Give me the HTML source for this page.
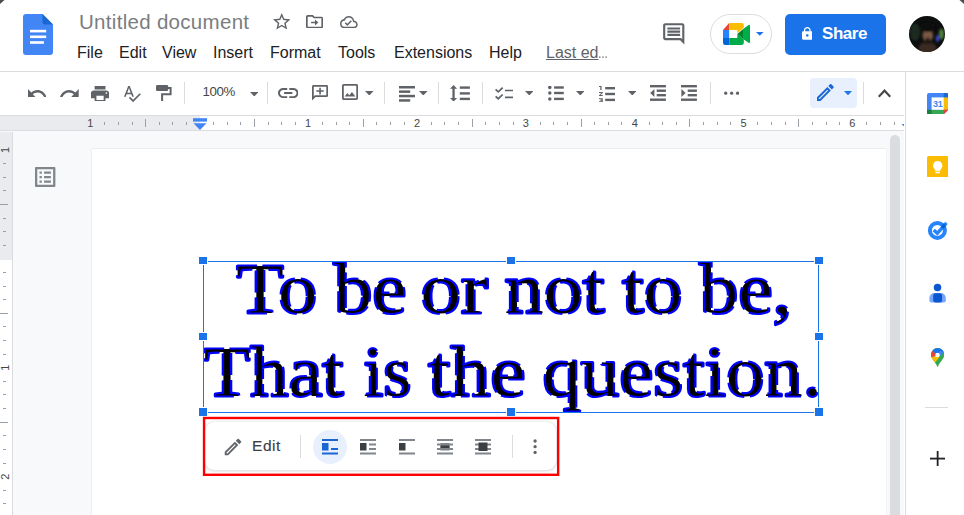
<!DOCTYPE html>
<html lang="en">
<head>
<meta charset="utf-8">
<title>Untitled document - Google Docs</title>
<style>
html,body{margin:0;padding:0;}
html{overflow:hidden;background:#fff;}
body{width:964px;height:515px;overflow:hidden;background:#fff;position:relative;font-family:"Liberation Sans",sans-serif;color:#202124;}
.abs{position:absolute;}
#header{left:0;top:0;width:964px;height:71px;background:#fff;border-bottom:1px solid #dadce0;}
#title{left:79px;top:10px;font-size:20.5px;line-height:24px;color:#7a7d80;white-space:nowrap;letter-spacing:0.3px;}
.menu{top:44px;font-size:16px;line-height:18px;color:#202124;white-space:nowrap;}
#toolbar{left:0;top:72px;width:904px;height:43px;background:#fff;}
.sep{width:1px;background:#dadce0;top:82px;height:22px;}
#hruler{left:0;top:115px;width:904px;height:14px;background:#fff;border-top:1px solid #dadce0;border-bottom:1px solid #dadce0;box-sizing:content-box;}
#canvas{left:0;top:131px;width:904px;height:384px;background:#f8f9fa;}
#vruler{left:0;top:132px;width:12px;height:383px;background:#fff;border-right:1px solid #dadce0;}
#sidebar{left:905px;top:72px;width:59px;height:443px;background:#fff;border-left:1px solid #dadce0;box-sizing:border-box;}
#page{left:92px;top:149px;width:794px;height:366px;background:#fff;box-shadow:0 -1px 0 0 #ebedef,-1px 0 0 0 #eceef0,1px 0 0 0 #f3f4f6;}
.h{width:8px;height:7px;background:#1a73e8;box-shadow:0 0 0 1px #fff;}
</style>
</head>
<body>
<div id="header" class="abs"></div>
<svg class="abs" style="left:0;top:0" width="8" height="8" viewBox="0 0 8 8"><path d="M0 0H4.5L0 4Z" fill="#4a4d51"/></svg>
<svg class="abs" style="left:956px;top:0" width="8" height="8" viewBox="0 0 8 8"><path d="M3.5 0H8V4Z" fill="#4a4d51"/></svg>
<svg class="abs" style="left:23px;top:14px" width="30" height="41" viewBox="0 0 30 41"><path d="M3 0H19.5L30 10.5V38a3 3 0 0 1-3 3H3a3 3 0 0 1-3-3V3a3 3 0 0 1 3-3Z" fill="#4285f4"/><path d="M19.5 0L30 10.5H21.5a2 2 0 0 1-2-2Z" fill="#1967d2"/><rect x="7" y="15.8" width="16.2" height="2.6" fill="#fff"/><rect x="7" y="21.5" width="16.2" height="2.6" fill="#fff"/><rect x="7" y="27.2" width="13.900" height="2.6" fill="#fff"/></svg>
<div id="title" class="abs">Untitled document</div>
<div class="abs menu" style="left:77px">File</div>
<div class="abs menu" style="left:119px">Edit</div>
<div class="abs menu" style="left:162px">View</div>
<div class="abs menu" style="left:213px">Insert</div>
<div class="abs menu" style="left:270px">Format</div>
<div class="abs menu" style="left:338px">Tools</div>
<div class="abs menu" style="left:394px">Extensions</div>
<div class="abs menu" style="left:489px">Help</div>
<div class="abs menu" style="left:546px;color:#5f6368;"><span style="text-decoration:underline">Last ed</span><span style="display:inline-block;transform:scaleX(.62);transform-origin:0 50%">…</span></div>
<svg class="abs" style="left:272.50px;top:13.10px" width="17.50" height="16.60" viewBox="2 2 20 19" preserveAspectRatio="none"><path fill="#5f6368" d="M22 9.24l-7.19-.62L12 2 9.19 8.63 2 9.24l5.46 4.73L5.82 21 12 17.27 18.18 21l-1.63-7.03L22 9.24zM12 15.4l-3.76 2.27 1-4.28-3.32-2.88 4.38-.38L12 6.1l1.71 4.04 4.38.38-3.32 2.88 1 4.28L12 15.4z"/></svg>
<svg class="abs" style="left:306.30px;top:14.60px" width="17.10" height="13.30" viewBox="2 4 20 16" preserveAspectRatio="none"><path fill="#5f6368" d="M20 6h-8l-2-2H4c-1.1 0-2 .9-2 2v12c0 1.1.9 2 2 2h16c1.1 0 2-.9 2-2V8c0-1.1-.9-2-2-2zm0 12H4V6h5.17l2 2H20v10zm-7.5-1.5l4-3.5-4-3.5v2.5H8v2h4.5v2.5z"/></svg>
<svg class="abs" style="left:340.20px;top:16.00px" width="17.70" height="12.30" viewBox="0 4 24 16" preserveAspectRatio="none"><path fill="#5f6368" d="M19.35 10.04C18.67 6.59 15.64 4 12 4 9.11 4 6.6 5.64 5.35 8.04 2.34 8.36 0 10.91 0 14c0 3.31 2.69 6 6 6h13c2.76 0 5-2.24 5-5 0-2.64-2.05-4.78-4.65-4.96zM19 18H6c-2.21 0-4-1.79-4-4 0-2.05 1.53-3.76 3.56-3.97l1.07-.11.5-.95C8.08 7.14 9.94 6 12 6c2.62 0 4.88 1.86 5.39 4.43l.3 1.5 1.53.11c1.56.1 2.78 1.41 2.78 2.96 0 1.65-1.35 3-3 3zm-9-3.82l-2.09-2.09L6.5 13.5 10 17l6.01-6.01-1.41-1.41z"/></svg>
<svg class="abs" style="left:661.05px;top:20.75px" width="25.5" height="25.5" viewBox="0 0 24 24" ><path fill="#5f6368" d="M21.99 4c0-1.1-.89-2-1.99-2H4c-1.1 0-2 .9-2 2v12c0 1.1.9 2 2 2h14l4 4-.01-18zM20 4v13.17L18.83 16H4V4h16zM6 12h12v2H6zm0-3h12v2H6zm0-3h12v2H6z"/></svg>
<div class="abs" style="left:710.3px;top:14px;width:61.5px;height:40px;border:1px solid #dadce0;border-radius:21px;box-sizing:border-box;background:#fff"></div>
<svg class="abs" style="left:722.9px;top:23px" width="27" height="21.9" viewBox="0 0 27 21.9"><path d="M0 7L6.150 0V7Z" fill="#ea4335"/><path d="M6.150 0H19a1.8 1.8 0 0 1 1.8 1.8V4.6L14.3 10.3V7H6.150Z" fill="#fbbc04"/><rect x="0" y="7" width="6.150" height="8" fill="#2684fc"/><path d="M0 15H6.150V21.900H1.8a1.8 1.8 0 0 1-1.8-1.8Z" fill="#0066da"/><path d="M6.150 15H14.3V11L20.8 16.6V20.100a1.8 1.8 0 0 1-1.8 1.8H6.150Z" fill="#00ac47"/><path d="M14.3 11L20.8 5.400V16.6Z" fill="#00832d"/><path d="M20.8 5.400L25.6 1.900C26.3 1.400 27 1.8 27 2.7V18.900C27 19.8 26.3 20.2 25.6 19.7L20.8 16.6Z" fill="#00ac47"/></svg>
<svg class="abs" style="left:756.1px;top:31.900px" width="7.6" height="3.8" viewBox="0 0 8 4"><path d="M0 0H8L4 4Z" fill="#1a73e8"/></svg>
<div class="abs" style="left:785px;top:14px;width:101px;height:41px;border-radius:5px;background:#1a73e8"></div>
<svg class="abs" style="left:801.80px;top:27.30px" width="10.60" height="12.80" viewBox="4 1 16 21" preserveAspectRatio="none"><path fill="#fff" d="M18 8h-1V6c0-2.76-2.24-5-5-5S7 3.24 7 6v2H6c-1.1 0-2 .9-2 2v10c0 1.1.9 2 2 2h12c1.1 0 2-.9 2-2V10c0-1.1-.9-2-2-2zm-6 9c-1.1 0-2-.9-2-2s.9-2 2-2 2 .9 2 2-.9 2-2 2zm3.1-9H8.9V6c0-1.71 1.39-3.1 3.1-3.1 1.71 0 3.1 1.39 3.1 3.1v2z"/></svg>
<div class="abs" style="left:822px;top:22px;font-size:17px;line-height:24px;font-weight:bold;color:#fff;letter-spacing:-0.45px">Share</div>
<svg class="abs" style="left:909px;top:16px" width="36" height="36" viewBox="0 0 36 36"><defs><clipPath id="avc"><circle cx="18" cy="18" r="18"/></clipPath><filter id="avb" x="-50%" y="-50%" width="200%" height="200%"><feGaussianBlur stdDeviation="1.1"/></filter></defs><g clip-path="url(#avc)"><rect width="36" height="36" fill="#0d0f0e"/><g filter="url(#avb)"><ellipse cx="6" cy="16" rx="5" ry="9" fill="#1c2a20"/><ellipse cx="32.5" cy="18" rx="2.5" ry="5.5" fill="#4f7f3a"/><ellipse cx="28.5" cy="22.5" rx="1.6" ry="3.2" fill="#3b48d8"/><ellipse cx="18.5" cy="32" rx="9" ry="6" fill="#3b2a22"/><ellipse cx="18.8" cy="19.5" rx="5.2" ry="6.8" fill="#7a5945"/><ellipse cx="18.8" cy="11.5" rx="8" ry="4.5" fill="#0b0b0b"/><ellipse cx="18.8" cy="25.5" rx="4" ry="2.2" fill="#1a1411"/><ellipse cx="18.8" cy="22.3" rx="2.2" ry="0.900" fill="#2a1c16"/></g></g></svg>
<div id="toolbar" class="abs"></div>
<svg class="abs" style="left:27.80px;top:88.50px" width="18.50" height="8.80" viewBox="2 7 20.47 9" preserveAspectRatio="none"><path fill="#5f6368" d="M12.5 8c-2.65 0-5.05.99-6.9 2.6L2 7v9h9l-3.62-3.62c1.39-1.16 3.16-1.88 5.12-1.88 3.54 0 6.55 2.31 7.6 5.5l2.37-.78C21.08 11.03 17.15 8 12.5 8z"/></svg>
<svg class="abs" style="left:60.00px;top:88.50px" width="18.70" height="8.80" viewBox="1.54 7 20.46 9" preserveAspectRatio="none"><path fill="#5f6368" d="M18.4 10.6C16.55 8.99 14.15 8 11.5 8c-4.65 0-8.58 3.03-9.96 7.22L3.9 16c1.05-3.19 4.05-5.5 7.6-5.5 1.95 0 3.73.72 5.12 1.88L13 16h9V7l-3.6 3.6z"/></svg>
<svg class="abs" style="left:91.20px;top:85.50px" width="18.10" height="15.80" viewBox="2 3 20 18" preserveAspectRatio="none"><path fill="#5f6368" d="M19 8H5c-1.66 0-3 1.34-3 3v6h4v4h12v-4h4v-6c0-1.66-1.34-3-3-3zm-3 11H8v-5h8v5zm3-7c-.55 0-1-.45-1-1s.45-1 1-1 1 .45 1 1-.45 1-1 1zm-1-9H6v4h12V3z"/></svg>
<svg class="abs" style="left:123.80px;top:85.50px" width="16.90" height="16.20" viewBox="2.46 3 20.54 19.5" preserveAspectRatio="none"><path fill="#5f6368" d="M12.45 16h2.09L9.43 3H7.57L2.46 16h2.09l1.12-3h5.64l1.14 3zm-6.02-5L8.5 5.48 10.57 11H6.43zm15.16.59l-8.09 8.09L9.83 16l-1.41 1.41 5.09 5.09L23 13l-1.41-1.41z"/></svg>
<svg class="abs" style="left:277.80px;top:87.80px" width="20.50" height="10.10" viewBox="2 7 20 10" preserveAspectRatio="none"><path fill="#5f6368" d="M3.9 12c0-1.71 1.39-3.1 3.1-3.1h4V7H7c-2.76 0-5 2.24-5 5s2.24 5 5 5h4v-1.9H7c-1.71 0-3.1-1.39-3.1-3.1zM8 13h8v-2H8v2zm9-6h-4v1.9h4c1.71 0 3.1 1.39 3.1 3.1s-1.39 3.1-3.1 3.1h-4V17h4c2.76 0 5-2.24 5-5s-2.24-5-5-5z"/></svg>
<svg class="abs" style="left:312.20px;top:85.10px" width="16.10" height="15.50" viewBox="2 2 20 20" preserveAspectRatio="none"><path fill="#5f6368" d="M2 4c0-1.1.9-2 2-2h16c1.1 0 2 .9 2 2v11.5c0 1.1-.9 2-2 2H6.5L2 22V4zm2.2 12.8L5.5 15.3H19.8V4.2H4.2v12.6zM11 5.400h2v3.400h3.6v2H13v3.400h-2v-3.400H7.400v-2H11z"/></svg>
<svg class="abs" style="left:342.20px;top:84.40px" width="16.10" height="16.00" viewBox="3 3 18 18" preserveAspectRatio="none"><path fill="#5f6368" d="M19 5v14H5V5h14m0-2H5c-1.1 0-2 .9-2 2v14c0 1.1.9 2 2 2h14c1.1 0 2-.9 2-2V5c0-1.1-.9-2-2-2zm-4.86 8.86l-3 3.87L9 13.14 6 17h12l-3.86-5.14z"/></svg>
<svg class="abs" style="left:495.20px;top:86.50px" width="18.20" height="13.00" viewBox="2 3.93 20 15.07" preserveAspectRatio="none"><path fill="#5f6368" d="M22 7h-9v2h9V7zm0 8h-9v2h9v-2zM5.54 11L2 7.46l1.41-1.41 2.12 2.12 4.24-4.24 1.41 1.41L5.54 11zm0 8L2 15.46l1.41-1.41 2.12 2.12 4.24-4.24 1.41 1.41L5.54 19z"/></svg>
<svg class="abs" style="left:249.80px;top:91.90px" width="8.60" height="4.50" viewBox="7 10 10 5" preserveAspectRatio="none"><path fill="#5f6368" d="M7 10l5 5 5-5z"/></svg>
<svg class="abs" style="left:365.10px;top:90.90px" width="8.60" height="4.50" viewBox="7 10 10 5" preserveAspectRatio="none"><path fill="#5f6368" d="M7 10l5 5 5-5z"/></svg>
<svg class="abs" style="left:419.00px;top:90.90px" width="8.60" height="4.50" viewBox="7 10 10 5" preserveAspectRatio="none"><path fill="#5f6368" d="M7 10l5 5 5-5z"/></svg>
<svg class="abs" style="left:524.70px;top:90.90px" width="8.60" height="4.50" viewBox="7 10 10 5" preserveAspectRatio="none"><path fill="#5f6368" d="M7 10l5 5 5-5z"/></svg>
<svg class="abs" style="left:575.70px;top:90.90px" width="8.60" height="4.50" viewBox="7 10 10 5" preserveAspectRatio="none"><path fill="#5f6368" d="M7 10l5 5 5-5z"/></svg>
<svg class="abs" style="left:627.60px;top:90.90px" width="8.60" height="4.50" viewBox="7 10 10 5" preserveAspectRatio="none"><path fill="#5f6368" d="M7 10l5 5 5-5z"/></svg>
<svg class="abs" style="left:156.00px;top:85.00px" width="16" height="16.5" viewBox="0 0 16 16.5"><rect x="0" y="0.100" width="12.2" height="6" rx="1.3" fill="#5f6368"/><path d="M12 3H14.6V9.3H6.100V15.900" fill="none" stroke="#5f6368" stroke-width="2"/></svg>
<svg class="abs" style="left:450.30px;top:84.70px" width="20" height="16.6" viewBox="0 0 20 16.6"><path d="M3.550 0L7.100 3.7H4.7V12.900H7.100L3.550 16.6L0 12.900H2.400V3.7H0Z" fill="#5f6368"/><rect x="9.8" y="1.400" width="10.100" height="2.400" fill="#5f6368"/><rect x="9.8" y="7.2" width="10.100" height="2.400" fill="#5f6368"/><rect x="9.8" y="12.7" width="10.100" height="2.400" fill="#5f6368"/></svg>
<svg class="abs" style="left:548.00px;top:85.80px" width="16" height="15" viewBox="0 0 16 15"><circle cx="1.8" cy="1.5" r="1.750" fill="#5f6368"/><circle cx="1.8" cy="7" r="1.750" fill="#5f6368"/><circle cx="1.8" cy="12.900" r="1.750" fill="#5f6368"/><rect x="6.100" y="0.3" width="9.7" height="2.400" fill="#5f6368"/><rect x="6.100" y="5.8" width="9.7" height="2.400" fill="#5f6368"/><rect x="6.100" y="11.7" width="9.7" height="2.400" fill="#5f6368"/></svg>
<svg class="abs" style="left:598.90px;top:85.50px" width="16.4" height="16.4" viewBox="0 0 16.4 16.4"><path transform="translate(-2.540,-4.050) scale(1.270,1.0125)" d="M2 17h2v.5H3v1h1v.5H2v1h3v-4H2v1zm1-9h1V4H2v1h1v3zm-1 3h1.8L2 13.100v.9h3v-1H3.2L5 10.900V10H2v1z" fill="#5f6368"/><rect x="6.2" y="1" width="10" height="2.400" fill="#5f6368"/><rect x="6.2" y="6.8" width="10" height="2.400" fill="#5f6368"/><rect x="6.2" y="12.7" width="10" height="2.400" fill="#5f6368"/></svg>
<svg class="abs" style="left:723.60px;top:90.90px" width="15.4" height="4.4" viewBox="0 0 15.4 4.4"><circle cx="1.7" cy="2.150" r="1.650" fill="#5f6368"/><circle cx="7.650" cy="2.150" r="1.650" fill="#5f6368"/><circle cx="13.6" cy="2.150" r="1.650" fill="#5f6368"/></svg>
<svg class="abs" style="left:398.80px;top:85.50px" width="16.2" height="16" viewBox="0 0 16.2 16"><rect x="0" y="0" width="16.100" height="2.5" fill="#5f6368"/><rect x="0" y="4.400" width="11.2" height="2.5" fill="#5f6368"/><rect x="0" y="8.8" width="16.100" height="2.5" fill="#5f6368"/><rect x="0" y="13.2" width="11.2" height="2.5" fill="#5f6368"/></svg>
<svg class="abs" style="left:650.10px;top:85.10px" width="16" height="16" viewBox="0 0 16 16"><rect x="0" y="0" width="15.900" height="2.400" fill="#5f6368"/><rect x="6.7" y="4.5" width="9.2" height="2.400" fill="#5f6368"/><rect x="6.7" y="9" width="9.2" height="2.400" fill="#5f6368"/><rect x="0" y="13.5" width="15.900" height="2.400" fill="#5f6368"/><path d="M0.2 7.950L4.400 3.900V12Z" fill="#5f6368"/></svg>
<svg class="abs" style="left:681.10px;top:85.10px" width="16" height="16" viewBox="0 0 16 16"><rect x="0" y="0" width="15.900" height="2.400" fill="#5f6368"/><rect x="6.7" y="4.5" width="9.2" height="2.400" fill="#5f6368"/><rect x="6.7" y="9" width="9.2" height="2.400" fill="#5f6368"/><rect x="0" y="13.5" width="15.900" height="2.400" fill="#5f6368"/><path d="M4.6 7.950L0.400 3.900V12Z" fill="#5f6368"/></svg>
<div class="abs sep" style="left:184px"></div>
<div class="abs sep" style="left:267px"></div>
<div class="abs sep" style="left:384px"></div>
<div class="abs sep" style="left:438px"></div>
<div class="abs sep" style="left:482px"></div>
<div class="abs sep" style="left:710px"></div>
<div class="abs sep" style="left:863px"></div>
<div class="abs" style="left:202.5px;top:83px;font-size:13.3px;line-height:18px;color:#444746;letter-spacing:-0.4px">100%</div>
<div class="abs" style="left:810px;top:78px;width:47px;height:30px;border-radius:4px;background:#e8f0fe"></div>
<svg class="abs" style="left:816.80px;top:84.40px" width="16.80" height="16.90" viewBox="3 3 18.002 18" preserveAspectRatio="none"><path fill="#1967d2" d="M14.06 9.02l.92.92L5.92 19H5v-.92l9.06-9.06M17.66 3c-.25 0-.51.1-.7.29l-1.83 1.83 3.75 3.75 1.83-1.83c.39-.39.39-1.02 0-1.41l-2.34-2.34c-.2-.2-.45-.29-.71-.29zm-3.6 3.19L3 17.25V21h3.75L17.81 9.94l-3.75-3.75z"/></svg>
<svg class="abs" style="left:843.90px;top:90.70px" width="8.00" height="4.30" viewBox="7 10 10 5" preserveAspectRatio="none"><path fill="#1a73e8" d="M7 10l5 5 5-5z"/></svg>
<svg class="abs" style="left:877.80px;top:89.00px" width="13.00" height="8.50" viewBox="6 8 12 7.41" preserveAspectRatio="none"><path fill="#444746" d="M12 8l-6 6 1.41 1.41L12 10.83l4.59 4.58L18 14z"/></svg>
<div id="hruler" class="abs"><div class="abs" style="left:0;top:0;width:200px;height:14px;background:#e9ebee"></div></div>
<svg class="abs" style="left:0;top:116px" width="904" height="15" viewBox="0 0 904 15"><text x="90.4" y="10.8" font-size="11" text-anchor="middle" fill="#444746" font-family="Liberation Sans, sans-serif">1</text><rect x="104" y="6" width="1" height="3" fill="#9aa0a6"/><rect x="118" y="6" width="1" height="3" fill="#9aa0a6"/><rect x="132" y="6" width="1" height="3" fill="#9aa0a6"/><rect x="145" y="3" width="1" height="8" fill="#9aa0a6"/><rect x="159" y="6" width="1" height="3" fill="#9aa0a6"/><rect x="172" y="6" width="1" height="3" fill="#9aa0a6"/><rect x="186" y="6" width="1" height="3" fill="#9aa0a6"/><rect x="213" y="6" width="1" height="3" fill="#9aa0a6"/><rect x="227" y="6" width="1" height="3" fill="#9aa0a6"/><rect x="240" y="6" width="1" height="3" fill="#9aa0a6"/><rect x="254" y="3" width="1" height="8" fill="#9aa0a6"/><rect x="268" y="6" width="1" height="3" fill="#9aa0a6"/><rect x="281" y="6" width="1" height="3" fill="#9aa0a6"/><rect x="295" y="6" width="1" height="3" fill="#9aa0a6"/><text x="308.1" y="10.8" font-size="11" text-anchor="middle" fill="#444746" font-family="Liberation Sans, sans-serif">1</text><rect x="322" y="6" width="1" height="3" fill="#9aa0a6"/><rect x="336" y="6" width="1" height="3" fill="#9aa0a6"/><rect x="349" y="6" width="1" height="3" fill="#9aa0a6"/><rect x="363" y="3" width="1" height="8" fill="#9aa0a6"/><rect x="376" y="6" width="1" height="3" fill="#9aa0a6"/><rect x="390" y="6" width="1" height="3" fill="#9aa0a6"/><rect x="404" y="6" width="1" height="3" fill="#9aa0a6"/><text x="417.0" y="10.8" font-size="11" text-anchor="middle" fill="#444746" font-family="Liberation Sans, sans-serif">2</text><rect x="431" y="6" width="1" height="3" fill="#9aa0a6"/><rect x="444" y="6" width="1" height="3" fill="#9aa0a6"/><rect x="458" y="6" width="1" height="3" fill="#9aa0a6"/><rect x="472" y="3" width="1" height="8" fill="#9aa0a6"/><rect x="485" y="6" width="1" height="3" fill="#9aa0a6"/><rect x="499" y="6" width="1" height="3" fill="#9aa0a6"/><rect x="513" y="6" width="1" height="3" fill="#9aa0a6"/><text x="525.8" y="10.8" font-size="11" text-anchor="middle" fill="#444746" font-family="Liberation Sans, sans-serif">3</text><rect x="540" y="6" width="1" height="3" fill="#9aa0a6"/><rect x="553" y="6" width="1" height="3" fill="#9aa0a6"/><rect x="567" y="6" width="1" height="3" fill="#9aa0a6"/><rect x="581" y="3" width="1" height="8" fill="#9aa0a6"/><rect x="594" y="6" width="1" height="3" fill="#9aa0a6"/><rect x="608" y="6" width="1" height="3" fill="#9aa0a6"/><rect x="621" y="6" width="1" height="3" fill="#9aa0a6"/><text x="634.7" y="10.8" font-size="11" text-anchor="middle" fill="#444746" font-family="Liberation Sans, sans-serif">4</text><rect x="649" y="6" width="1" height="3" fill="#9aa0a6"/><rect x="662" y="6" width="1" height="3" fill="#9aa0a6"/><rect x="676" y="6" width="1" height="3" fill="#9aa0a6"/><rect x="689" y="3" width="1" height="8" fill="#9aa0a6"/><rect x="703" y="6" width="1" height="3" fill="#9aa0a6"/><rect x="717" y="6" width="1" height="3" fill="#9aa0a6"/><rect x="730" y="6" width="1" height="3" fill="#9aa0a6"/><text x="743.6" y="10.8" font-size="11" text-anchor="middle" fill="#444746" font-family="Liberation Sans, sans-serif">5</text><rect x="757" y="6" width="1" height="3" fill="#9aa0a6"/><rect x="771" y="6" width="1" height="3" fill="#9aa0a6"/><rect x="785" y="6" width="1" height="3" fill="#9aa0a6"/><rect x="798" y="3" width="1" height="8" fill="#9aa0a6"/><rect x="812" y="6" width="1" height="3" fill="#9aa0a6"/><rect x="826" y="6" width="1" height="3" fill="#9aa0a6"/><rect x="839" y="6" width="1" height="3" fill="#9aa0a6"/><text x="852.4" y="10.8" font-size="11" text-anchor="middle" fill="#444746" font-family="Liberation Sans, sans-serif">6</text><rect x="866" y="6" width="1" height="3" fill="#9aa0a6"/><rect x="880" y="6" width="1" height="3" fill="#9aa0a6"/><rect x="894" y="6" width="1" height="3" fill="#9aa0a6"/><rect x="193" y="2.2" width="14" height="3.400" fill="#4285f4"/><path d="M193.5 7.3H206.5L200 14Z" fill="#4285f4"/><path d="M901.5 8H904V10.5Z" fill="#4285f4"/></svg>
<div id="canvas" class="abs"></div>
<div id="vruler" class="abs"><div class="abs" style="left:0;top:0;width:12px;height:128px;background:#e9ebee"></div></div>
<svg class="abs" style="left:0;top:131px" width="12" height="384" viewBox="0 131 12 384"><text transform="translate(9,150.0) rotate(-90)" font-size="11" text-anchor="middle" fill="#444746" font-family="Liberation Sans, sans-serif">1</text><rect x="3" y="163" width="3" height="1" fill="#9aa0a6"/><rect x="3" y="177" width="3" height="1" fill="#9aa0a6"/><rect x="3" y="190" width="3" height="1" fill="#9aa0a6"/><rect x="0" y="204" width="8" height="1" fill="#9aa0a6"/><rect x="3" y="218" width="3" height="1" fill="#9aa0a6"/><rect x="3" y="231" width="3" height="1" fill="#9aa0a6"/><rect x="3" y="245" width="3" height="1" fill="#9aa0a6"/><rect x="3" y="272" width="3" height="1" fill="#9aa0a6"/><rect x="3" y="286" width="3" height="1" fill="#9aa0a6"/><rect x="3" y="299" width="3" height="1" fill="#9aa0a6"/><rect x="0" y="313" width="8" height="1" fill="#9aa0a6"/><rect x="3" y="326" width="3" height="1" fill="#9aa0a6"/><rect x="3" y="340" width="3" height="1" fill="#9aa0a6"/><rect x="3" y="354" width="3" height="1" fill="#9aa0a6"/><text transform="translate(9,367.8) rotate(-90)" font-size="11" text-anchor="middle" fill="#444746" font-family="Liberation Sans, sans-serif">1</text><rect x="3" y="381" width="3" height="1" fill="#9aa0a6"/><rect x="3" y="394" width="3" height="1" fill="#9aa0a6"/><rect x="3" y="408" width="3" height="1" fill="#9aa0a6"/><rect x="0" y="422" width="8" height="1" fill="#9aa0a6"/><rect x="3" y="435" width="3" height="1" fill="#9aa0a6"/><rect x="3" y="449" width="3" height="1" fill="#9aa0a6"/><rect x="3" y="463" width="3" height="1" fill="#9aa0a6"/><text transform="translate(9,476.6) rotate(-90)" font-size="11" text-anchor="middle" fill="#444746" font-family="Liberation Sans, sans-serif">2</text><rect x="3" y="490" width="3" height="1" fill="#9aa0a6"/><rect x="3" y="503" width="3" height="1" fill="#9aa0a6"/></svg>
<svg class="abs" style="left:35.30px;top:166.80px" width="20.40" height="20.10" viewBox="3 3 18 18" preserveAspectRatio="none"><path fill="#80868b" d="M11 7h6v2h-6zm0 4h6v2h-6zm0 4h6v2h-6zM7 7h2v2H7zm0 4h2v2H7zm0 4h2v2H7zM20.1 3H3.9c-.5 0-.9.4-.9.9v16.2c0 .4.4.9.9.9h16.2c.4 0 .9-.5.9-.9V3.9c0-.5-.5-.9-.9-.9zM19 19H5V5h14v14z"/></svg>
<div id="page" class="abs"></div>
<div class="abs" style="left:890px;top:135px;width:10px;height:380px;border-radius:5px 5px 0 0;background:#dadce0"></div>
<svg class="abs" style="left:190px;top:250px" width="650" height="175" viewBox="190 250 650 175">
<g font-family="'Liberation Serif', 'DejaVu Serif', serif" font-size="71.5" fill="#000" stroke="#0000ff" stroke-width="3.2" stroke-dasharray="22 5" stroke-linejoin="round" paint-order="stroke">
<text y="312.7" lengthAdjust="spacingAndGlyphs"><tspan x="236.2" textLength="81.06" lengthAdjust="spacingAndGlyphs">To</tspan> <tspan x="333.69" textLength="72.92" lengthAdjust="spacingAndGlyphs">be</tspan> <tspan x="420.59" textLength="67.35" lengthAdjust="spacingAndGlyphs">or</tspan> <tspan x="504.49" textLength="100.13" lengthAdjust="spacingAndGlyphs">not</tspan> <tspan x="622.21" textLength="60.14" lengthAdjust="spacingAndGlyphs">to</tspan> <tspan x="699.49" textLength="92.67" lengthAdjust="spacingAndGlyphs">be,</tspan></text>
<text y="395.8" lengthAdjust="spacingAndGlyphs"><tspan x="203.73" textLength="139.71" lengthAdjust="spacingAndGlyphs">That</tspan> <tspan x="363.29" textLength="48.25" lengthAdjust="spacingAndGlyphs">is</tspan> <tspan x="428.27" textLength="97.37" lengthAdjust="spacingAndGlyphs">the</tspan> <tspan x="542.44" textLength="279.44" lengthAdjust="spacingAndGlyphs">question.</tspan></text>
</g>
<g aria-hidden="true" font-family="'Liberation Serif', 'DejaVu Serif', serif" font-size="71.5" fill="none" stroke="#0000ff" stroke-width="1.2" stroke-dasharray="22 5" stroke-linejoin="round">
<text y="312.7" lengthAdjust="spacingAndGlyphs"><tspan x="236.2" textLength="81.06" lengthAdjust="spacingAndGlyphs">To</tspan> <tspan x="333.69" textLength="72.92" lengthAdjust="spacingAndGlyphs">be</tspan> <tspan x="420.59" textLength="67.35" lengthAdjust="spacingAndGlyphs">or</tspan> <tspan x="504.49" textLength="100.13" lengthAdjust="spacingAndGlyphs">not</tspan> <tspan x="622.21" textLength="60.14" lengthAdjust="spacingAndGlyphs">to</tspan> <tspan x="699.49" textLength="92.67" lengthAdjust="spacingAndGlyphs">be,</tspan></text>
<text y="395.8" lengthAdjust="spacingAndGlyphs"><tspan x="203.73" textLength="139.71" lengthAdjust="spacingAndGlyphs">That</tspan> <tspan x="363.29" textLength="48.25" lengthAdjust="spacingAndGlyphs">is</tspan> <tspan x="428.27" textLength="97.37" lengthAdjust="spacingAndGlyphs">the</tspan> <tspan x="542.44" textLength="279.44" lengthAdjust="spacingAndGlyphs">question.</tspan></text>
</g>
</svg>
<div class="abs" style="left:203px;top:261px;width:616px;height:152px;border:1px solid #1a73e8;box-sizing:border-box"></div>
<div class="abs h" style="left:199px;top:257px"></div>
<div class="abs h" style="left:199px;top:333px"></div>
<div class="abs h" style="left:199px;top:408px;height:8px"></div>
<div class="abs h" style="left:507px;top:257px"></div>
<div class="abs h" style="left:507px;top:408px;height:8px"></div>
<div class="abs h" style="left:815px;top:257px"></div>
<div class="abs h" style="left:815px;top:333px"></div>
<div class="abs h" style="left:815px;top:408px;height:8px"></div>
<div class="abs" style="left:205px;top:422px;width:350.5px;height:47.5px;border-radius:9px;background:#fff;box-shadow:0 1px 3px 1px rgba(60,64,67,.11),0 0 2px rgba(60,64,67,.16)"></div>
<svg class="abs" style="left:222.00px;top:436.00px" width="22" height="22" viewBox="0 0 24 24" ><path fill="#5f6368" d="M14.06 9.02l.92.92L5.92 19H5v-.92l9.06-9.06M17.66 3c-.25 0-.51.1-.7.29l-1.83 1.83 3.75 3.75 1.83-1.83c.39-.39.39-1.02 0-1.41l-2.34-2.34c-.2-.2-.45-.29-.71-.29zm-3.6 3.19L3 17.25V21h3.75L17.81 9.94l-3.75-3.75z"/></svg>
<div class="abs" style="left:252px;top:436px;font-size:15.5px;line-height:20px;color:#3c4043;letter-spacing:0.55px;-webkit-text-stroke:0.15px #3c4043;">Edit</div>
<div class="abs" style="left:300px;top:435px;width:1px;height:23px;background:#dadce0"></div>
<div class="abs" style="left:512px;top:435px;width:1px;height:23px;background:#dadce0"></div>
<div class="abs" style="left:313px;top:429.5px;width:34px;height:34px;border-radius:50%;background:#e8f0fe"></div>
<svg class="abs" style="left:322px;top:438px" width="16" height="17" viewBox="0 0 16 17"><rect x="0" y="1" width="16" height="2" fill="#1967d2"/><rect x="0" y="5" width="6.5" height="7.5" fill="#1967d2"/><rect x="9" y="10" width="7" height="2" fill="#1967d2"/><rect x="0" y="14.5" width="16" height="2" fill="#1967d2"/></svg>
<svg class="abs" style="left:360px;top:438px" width="16" height="17" viewBox="0 0 16 17"><rect x="0" y="1" width="16" height="2" fill="#80868b"/><rect x="0" y="5" width="6.5" height="7.5" fill="#3c4043"/><rect x="9" y="5.5" width="7" height="2" fill="#80868b"/><rect x="9" y="10" width="7" height="2" fill="#80868b"/><rect x="0" y="14.5" width="16" height="2" fill="#80868b"/></svg>
<svg class="abs" style="left:399px;top:438px" width="16" height="17" viewBox="0 0 16 17"><rect x="0" y="1" width="16" height="2" fill="#80868b"/><rect x="0" y="5" width="6.5" height="7.5" fill="#3c4043"/><rect x="0" y="14.5" width="16" height="2" fill="#80868b"/></svg>
<svg class="abs" style="left:437px;top:438px" width="16" height="17" viewBox="0 0 16 17"><rect x="0" y="1" width="16" height="2" fill="#80868b"/><rect x="0" y="5.5" width="16" height="2" fill="#80868b"/><rect x="0" y="10" width="16" height="2" fill="#80868b"/><rect x="0" y="14.5" width="16" height="2" fill="#80868b"/><rect x="3.5" y="5" width="9" height="7.5" fill="#80868b"/><rect x="3.5" y="7.5" width="9" height="2.5" fill="#3c4043"/></svg>
<svg class="abs" style="left:475px;top:438px" width="16" height="17" viewBox="0 0 16 17"><rect x="0" y="1" width="16" height="2" fill="#80868b"/><rect x="0" y="5.5" width="16" height="2" fill="#80868b"/><rect x="0" y="10" width="16" height="2" fill="#80868b"/><rect x="0" y="14.5" width="16" height="2" fill="#80868b"/><rect x="3.5" y="4.5" width="9" height="8.5" fill="#3c4043"/></svg>
<svg class="abs" style="left:533.00px;top:439.00px" width="4.4" height="15.4" viewBox="0 0 4.4 15.4"><circle cx="2.100" cy="2" r="1.650" fill="#5f6368"/><circle cx="2.100" cy="7.7" r="1.650" fill="#5f6368"/><circle cx="2.100" cy="13.400" r="1.650" fill="#5f6368"/></svg>
<svg class="abs" style="left:200px;top:414px" width="364" height="66" viewBox="200 414 364 66"><rect x="204.050" y="418" width="354.100" height="56.8" fill="none" stroke="#ff0000" stroke-width="2.400"/></svg>
<div id="sidebar" class="abs"></div>
<svg class="abs" style="left:926.9px;top:92.8px" width="21.6" height="21.4" viewBox="0 0 21.6 21.4"><defs><clipPath id="calc"><path d="M2 0H19.6a2 2 0 0 1 2 2V16.8L16.8 21.400H2a2 2 0 0 1-2-2V2a2 2 0 0 1 2-2Z"/></clipPath></defs><g clip-path="url(#calc)"><rect width="21.6" height="21.400" fill="#4285f4"/><rect x="16.8" y="0" width="4.8" height="4.5" fill="#1967d2"/><rect x="16.8" y="4.5" width="4.8" height="12.3" fill="#fbbc04"/><rect x="4.6" y="16.8" width="12.2" height="4.6" fill="#34a853"/><rect x="0" y="16.8" width="4.6" height="4.6" fill="#188038"/><path d="M16.8 16.8H21.6L16.8 21.400Z" fill="#ea4335"/><rect x="4.6" y="4.400" width="12.2" height="12.400" fill="#fff"/></g><text x="10.7" y="13.900" font-size="9" font-weight="bold" text-anchor="middle" fill="#4285f4" font-family="Liberation Sans, sans-serif" letter-spacing="-0.2">31</text></svg>
<svg class="abs" style="left:926.8px;top:155.5px" width="21.4" height="21.7" viewBox="0 0 21.4 21.7"><rect width="21.400" height="21.7" rx="1.8" fill="#fbbc04"/><path d="M10.7 5.100a4.6 4.6 0 0 0-2.8 8.250V14.8h5.6V13.350A4.6 4.6 0 0 0 10.7 5.100Z" fill="#fff"/><rect x="8.5" y="15.6" width="4.400" height="1.7" fill="#fff"/></svg>
<svg class="abs" style="left:926px;top:219px" width="23" height="23" viewBox="0 0 23 23"><circle cx="11.400" cy="11.400" r="7.5" fill="none" stroke="#2684fc" stroke-width="4"/><path d="M7.7 11L11.3 14.3L20.5 3.8" fill="none" stroke="#2684fc" stroke-width="3.400" stroke-linejoin="miter"/><path d="M16.030 8.900L18.820 5.720" fill="none" stroke="#0066da" stroke-width="3.400"/></svg>
<svg class="abs" style="left:927px;top:283px" width="21" height="21" viewBox="0 0 21 21"><circle cx="10.5" cy="4.5" r="3.750" fill="#0b57d0"/><path d="M7.400 10H13.8a5 5 0 0 1 5 5V17.6a2 2 0 0 1-2 2H4.400a2 2 0 0 1-2-2V15a5 5 0 0 1 5-5Z" fill="#76a7fa"/><rect x="6.2" y="10.2" width="8.900" height="9.2" rx="2.5" fill="#0b57d0"/></svg>
<svg class="abs" style="left:931px;top:347.7px" width="13.3" height="19.5" viewBox="0 0 13.3 19.5"><defs><clipPath id="pinc"><path d="M6.650 0A6.650 6.650 0 0 0 0 6.650C0 11 4.6 13.5 6.650 19.5C8.7 13.5 13.3 11 13.3 6.650A6.650 6.650 0 0 0 6.650 0Z"/></clipPath></defs><g clip-path="url(#pinc)"><rect width="13.3" height="19.5" fill="#34a853"/><path d="M6.6 7L0.2 9.2L-1 13L4.3 14.2L8.6 9Z" fill="#fbbc04"/><path d="M6.6 7L1.5 3L-1 2.5V9.6L0.2 9.2Z" fill="#ea4335"/><path d="M6.6 7L1.5 3V-1H14L12.400 4.3L8.6 8Z" fill="#1a73e8"/><path d="M6.6 7L9.5 2.5L12.400 4.3L8.6 8.5Z" fill="#4285f4"/><circle cx="6.550" cy="6.950" r="2.3" fill="#fff"/></g></svg>
<div class="abs" style="left:925px;top:407px;width:23px;height:1px;background:#dadce0"></div>
<svg class="abs" style="left:929.80px;top:450.70px" width="15.4" height="15.2" viewBox="0 0 15.4 15.2"><rect x="0" y="6.7" width="15.3" height="1.8" fill="#202124"/><rect x="6.750" y="0" width="1.8" height="15.100" fill="#202124"/></svg>
</body>
</html>
